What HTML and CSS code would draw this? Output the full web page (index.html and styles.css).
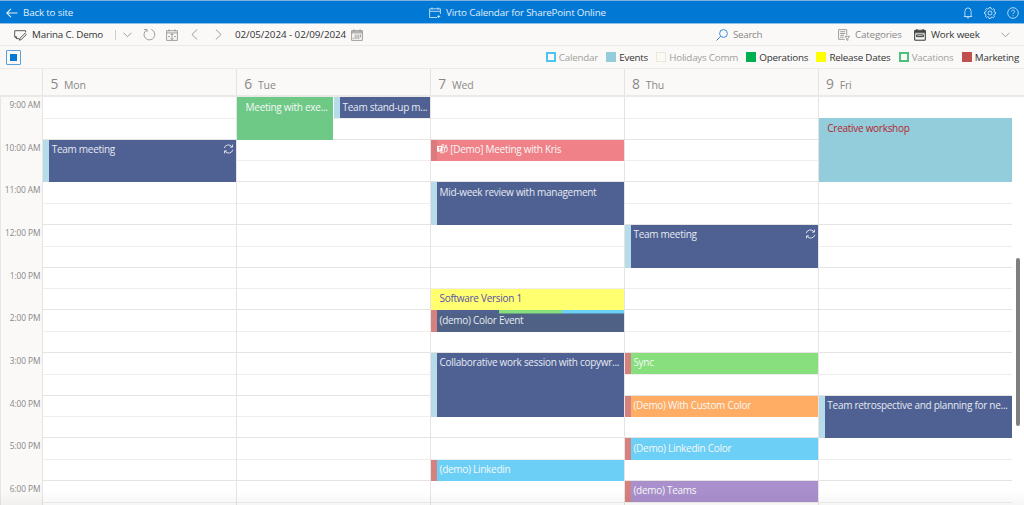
FILE: index.html
```
<!DOCTYPE html>
<html lang="en">
<head>
    <title>Virto Calendar for SharePoint Online</title>
    <meta charset="utf-8">
    <link rel="stylesheet" href="styles.css">
</head>
<body>
    <div class="app">
        <header class="topbar">
            <a class="back">
                <svg width="12" height="10" viewBox="0 0 12 10"><path d="M5 .8L.8 5L5 9.2M.8 5H11.5"/></svg>
                <span>Back to site</span>
            </a>
            <div class="title">
                <svg width="12" height="12" viewBox="0 0 12 12"><path d="M8 10.5H.6V1.8H11.4V7M.6 4.3H11.4M3 .4V2.6M9 .4V2.6"/><path d="M9.7 8V11M8.2 9.5H11.2"/></svg>
                <span>Virto Calendar for SharePoint Online</span>
            </div>
            <div class="top-actions">
                <svg width="10" height="12" viewBox="0 0 10 12"><path d="M.8 9.5H9.2M1.9 9.5V4.4a3.1 3.5 0 0 1 6.2 0V9.5M3.8 9.8a1.2 1.2 0 0 0 2.4 0"/></svg>
                <svg width="12" height="12" viewBox="0 0 12 12"><path d="M5 .6H7L7.3 2L8.5 2.5L9.7 1.7L10.8 3L10 4L10.3 5L11.5 5.3V7L10.2 7.3L9.8 8.3L10.5 9.5L9.2 10.7L8.1 10L7.1 10.3L6.8 11.5H5.1L4.8 10.2L3.7 9.8L2.6 10.5L1.3 9.2L2 8.2L1.7 7.1L.5 6.8V5L1.8 4.8L2.3 3.6L1.5 2.5L2.7 1.4L3.8 2.1L4.7 1.8Z"/><circle cx="6" cy="6" r="2"/></svg>
                <svg width="12" height="12" viewBox="0 0 12 12"><circle cx="6" cy="6" r="5.3"/><path d="M4.4 4.6a1.6 1.5 0 1 1 2.5 1.2Q6 6.4 6 7.2M6 8.3V9.2"/></svg>
            </div>
        </header>

        <div class="toolbar">
            <div class="user">
                <svg width="13" height="12" viewBox="0 0 13 12"><path d="M5 9.7H2.7L.7 7.8V1.7H11.6V3.5M2.7 9.7V7.8H.7M11 4.3L12.3 5.6L7.2 10.6L5.3 11.2L5.9 9.3Z"/></svg>
                <span>Marina C. Demo</span>
            </div>
            <div class="user-menu">
                <svg width="9" height="6" viewBox="0 0 9 6"><path d="M.5 .7L4.5 4.7L8.5 .7"/></svg>
            </div>
            <svg class="refresh" width="13" height="13" viewBox="0 0 13 13"><path d="M8.4 1.5A5.4 5.4 0 1 1 3.6 1.9M1.2 1.5H4V4.2"/></svg>
            <svg class="today" width="12" height="12" viewBox="0 0 12 12"><path d="M.6 1.7H11.4V11.4H.6ZM.6 3.9H11.4M3 .4V2.5M9 .4V2.5M6 4.8V10.6M4.6 6L6 4.6L7.4 6M4.6 9.2L6 10.6L7.4 9.2M2 7.6H4M8 7.6H10"/></svg>
            <svg class="prev" width="7" height="11" viewBox="0 0 7 11"><path d="M6.2 .5L.9 5.5L6.2 10.5"/></svg>
            <svg class="next" width="7" height="11" viewBox="0 0 7 11"><path d="M.8 .5L6.1 5.5L.8 10.5"/></svg>
            <span class="range">02/05/2024 - 02/09/2024</span>
            <svg class="picker" width="12" height="12" viewBox="0 0 12 12"><path d="M.6 1.7H11.4V11.4H.6ZM.6 2.8H11.4M.6 3.9H11.4M3 .4V2.5M9 .4V2.5M2.4 8.7V10M4.2 5.5V10M6 5.5V10M7.8 5.5V10M9.6 5.5V8.5"/></svg>
            <div class="search">
                <svg width="12" height="12" viewBox="0 0 12 12"><circle cx="7.5" cy="4.5" r="3.9"/><path d="M4.7 7.3L.5 11.5"/></svg>
                <span>Search</span>
            </div>
            <div class="categories">
                <svg width="12" height="12" viewBox="0 0 12 12"><path d="M6.8 10.3H.6V.6H8.7V6M2.2 2.7H7.2M2.2 4.5H7.2M2.2 6.3H6M2.2 8.2H5.5M7 7.3H11.6L9.9 9.4V11.4L8.6 10.8V9.4Z"/></svg>
                <span>Categories</span>
            </div>
            <div class="view">
                <svg width="12" height="12" viewBox="0 0 12 12"><path d="M.7 1.3H11.3V11.2H.7ZM.7 3.8H11.3M3 0V2.2M9 0V2.2M2.6 5.9H9.4V7.7H2.6Z"/><path d="M.7 2.6H11.3"/></svg>
                <span>Work week</span>
            </div>
            <svg class="view-menu" width="9" height="6" viewBox="0 0 9 6"><path d="M.5 .7L4.5 4.7L8.5 .7"/></svg>
        </div>

        <div class="legend">
            <div class="check-all"></div>
            <div class="sources">
                <div class="source off calendar"><i></i><span>Calendar</span></div>
                <div class="source events"><i></i><span>Events</span></div>
                <div class="source off holidays"><i></i><span>Holidays Comm</span></div>
                <div class="source operations"><i></i><span>Operations</span></div>
                <div class="source releases"><i></i><span>Release Dates</span></div>
                <div class="source off vacations"><i></i><span>Vacations</span></div>
                <div class="source marketing"><i></i><span>Marketing</span></div>
            </div>
        </div>

        <div class="week-head">
            <div></div>
            <div class="day-name"><b>5</b>Mon</div>
            <div class="day-name"><b>6</b>Tue</div>
            <div class="day-name"><b>7</b>Wed</div>
            <div class="day-name"><b>8</b>Thu</div>
            <div class="day-name"><b>9</b>Fri</div>
        </div>

        <main class="week">
            <div class="hours">
                <span>9:00 AM</span>
                <span>10:00 AM</span>
                <span>11:00 AM</span>
                <span>12:00 PM</span>
                <span>1:00 PM</span>
                <span>2:00 PM</span>
                <span>3:00 PM</span>
                <span>4:00 PM</span>
                <span>5:00 PM</span>
                <span>6:00 PM</span>
            </div>

            <div class="day">
                <div class="event navy at-1000 long-2"><span>Team meeting</span>
                    <svg width="11" height="10" viewBox="0 0 11 10"><path d="M1.2 4.2A4.3 4.2 0 0 1 9 2.8M9.5 .6V3.1H7M9.8 5.8A4.3 4.2 0 0 1 2 7.2M1.5 9.4V6.9H4"/></svg>
                </div>
            </div>

            <div class="day split">
                <div class="event green plain at-900 long-2"><span>Meeting with exe...</span></div>
                <div class="event navy second at-900"><span>Team stand-up m...</span></div>
            </div>

            <div class="day">
                <div class="event pink teams at-1000">
                    <svg width="11" height="10" viewBox="0 0 11 10"><path class="fill" d="M0 2H5.6V7.6H0Z"/><path class="mark" d="M1.3 3.5H4.3M2.8 3.5V6.5"/><path d="M6.2 3.6H10.2V6Q10.2 8 8.3 8M7.6 3.6V6.5Q7.4 9 5 9Q3.4 9 3 8"/><circle cx="5.8" cy="1.4" r="1.1"/><circle cx="9" cy="1.9" r=".8"/></svg>
                    <span>[Demo] Meeting with Kris</span>
                </div>
                <div class="event navy at-1100 long-2"><span>Mid-week review with management</span></div>
                <div class="event yellow plain at-1330"><span>Software Version 1</span></div>
                <div class="event slate marketing-bar at-1400"><span>(demo) Color Event</span></div>
                <div class="event navy at-1500 long-3"><span>Collaborative work session with copywr...</span></div>
                <div class="event sky marketing-bar at-1730"><span>(demo) Linkedin</span></div>
            </div>

            <div class="day">
                <div class="event navy at-1200 long-2"><span>Team meeting</span>
                    <svg width="11" height="10" viewBox="0 0 11 10"><path d="M1.2 4.2A4.3 4.2 0 0 1 9 2.8M9.5 .6V3.1H7M9.8 5.8A4.3 4.2 0 0 1 2 7.2M1.5 9.4V6.9H4"/></svg>
                </div>
                <div class="event lime marketing-bar at-1500"><span>Sync</span></div>
                <div class="event orange marketing-bar at-1600"><span>(Demo) With Custom Color</span></div>
                <div class="event sky marketing-bar at-1700"><span>(Demo) Linkedin Color</span></div>
                <div class="event purple marketing-bar at-1800"><span>(demo) Teams</span></div>
            </div>

            <div class="day">
                <div class="event aqua plain at-930 long-3"><span>Creative workshop</span></div>
                <div class="event navy at-1600 long-2"><span>Team retrospective and planning for ne...</span></div>
            </div>

            <div class="scroll"><div class="thumb"></div></div>
        </main>
    </div>
</body>
</html>
```
FILE: styles.css
```
* {
    box-sizing: border-box;
}
body {
    margin: 0;
    height: 505px;
    overflow: hidden;
    font-family: "Open Sans", "Noto Sans", sans-serif;
    font-size: 9.8px;
    letter-spacing: -0.18px;
    color: #333;
    background: #fff;
}
svg {
    display: block;
    flex: none;
    fill: none;
    stroke: currentColor;
    stroke-width: 0.8;
}
span {
    white-space: nowrap;
}
.app {
    display: flex;
    flex-direction: column;
    height: 505px;
}

/* blue bar */
.topbar {
    display: grid;
    grid-template-columns: 429px 1fr 62px;
    align-items: center;
    height: 24px;
    padding-top: 1px;
    background: #0078d4;
    border-top: 1px solid #7fb2e0;
    border-bottom: 1px solid #8fc0ea;
    color: #e0eefa;
}
.back, .title {
    display: flex;
    align-items: center;
}
.back {
    padding-left: 6px;
    gap: 5px;
}
.title {
    gap: 5px;
}
.back svg {
    stroke-width: 1.1;
}
.top-actions {
    display: flex;
    align-items: center;
    gap: 11px;
    padding-left: 1px;
}

/* toolbar */
.toolbar {
    display: flex;
    align-items: center;
    height: 22px;
    padding-left: 14px;
    background: #faf9f8;
    border-bottom: 1px solid #edebe9;
    color: #8a8886;
}
.user {
    display: flex;
    align-items: center;
    gap: 5px;
    width: 101px;
    color: #333;
}
.user-menu {
    display: flex;
    align-items: center;
    width: 28px;
    height: 10px;
    padding-left: 7px;
    border-left: 1px solid #d0cecc;
}
.refresh {
    margin-right: 10px;
}
.today {
    margin-right: 13px;
}
.prev {
    margin-right: 17px;
}
.next {
    margin-right: 13px;
}
.range {
    width: 116px;
    letter-spacing: -0.05px;
    color: #333;
}
.search, .categories, .view {
    display: flex;
    align-items: center;
    gap: 5px;
}
.search {
    width: 122px;
    margin-left: auto;
    letter-spacing: -0.3px;
}
.search svg {
    color: #3b8edb;
    stroke-width: 1;
}
.categories {
    width: 76px;
}
.view {
    width: 87px;
    letter-spacing: -0.2px;
    color: #333;
}
.view svg {
    stroke-width: 1;
}
.view-menu {
    margin-right: 14px;
}

/* calendar sources */
.legend {
    display: flex;
    align-items: center;
    justify-content: space-between;
    height: 23px;
    padding: 0 5px 0 6px;
    background: #faf9f8;
    border-bottom: 1px solid #edebe9;
    letter-spacing: -0.23px;
}
.check-all {
    width: 15px;
    height: 15px;
    padding: 3px;
    border: 1px solid #5a9fe0;
    border-radius: 1px;
    background: #0078d4 content-box;
}
.sources {
    display: flex;
    gap: 8.3px;
}
.source {
    display: flex;
    align-items: center;
    gap: 3px;
}
.source i {
    width: 10px;
    height: 10px;
}
.off {
    color: #a19f9d;
}
.calendar i {
    border: 2px solid #4cc5f0;
}
.events i {
    background: #93ccdb;
}
.holidays i {
    border: 1px solid #ebebd8;
}
.operations i {
    background: #00b050;
}
.releases i {
    background: #ffff00;
}
.vacations i {
    border: 2px solid #4cc07c;
}
.marketing i {
    background: #c0504d;
}

/* week grid */
.week-head, .week {
    display: grid;
    grid-template-columns: 42.4px repeat(5, 193.92px) 1fr;
}
.week-head {
    height: 28px;
    background: #faf9f8;
    border-bottom: 2px solid #ebe9e8;
}
.day-name {
    display: flex;
    align-items: baseline;
    gap: 6px;
    padding: 5px 0 0 7px;
    border-left: 1px solid #e6e4e2;
    font-size: 10.5px;
    color: #8a8886;
}
.day-name b {
    font-size: 13.8px;
    font-weight: normal;
}
.week {
    position: relative;
    height: 408px;
    overflow: hidden;
}
/* soft fade along the bottom edge */
.week::after {
    content: "";
    position: absolute;
    inset: auto 0 0 0;
    height: 14px;
    background: linear-gradient(rgba(0, 0, 0, 0), rgba(0, 0, 0, 0.04));
}
.hours {
    display: grid;
    grid-template-rows: repeat(10, 42.67px);
    padding: 2px 2px 0 0;
    background: #faf9f8;
    border-left: 1px solid #e8e6e4;
    text-align: right;
    font-size: 8.4px;
    letter-spacing: -0.1px;
    color: #8a8886;
}
.day {
    display: grid;
    grid-template-rows: repeat(20, 21.335px);
    grid-template-columns: minmax(0, 1fr);
    border-left: 1px solid #e6e4e2;
    background: repeating-linear-gradient(#fff 0 20.6px, #efeeed 20.6px 21.7px, #fff 21.7px 41.6px, #e6e4e2 41.6px 42.67px);
}
.split {
    grid-template-columns: repeat(2, minmax(0, 1fr));
    column-gap: 1px;
}
.event {
    grid-column: 1;
    display: flex;
    align-items: flex-start;
    padding: 1.5px 2px 0 2.3px;
    border-left: 6px solid #b5dce8;
    font-size: 10px;
    letter-spacing: -0.28px;
    line-height: 16px;
    color: #e6eaf3;
}
.event span {
    flex: 1;
}
.event svg {
    margin: 3px 0 0 4px;
    stroke-width: 0.9;
}
.second {
    grid-column: 2;
}
.plain {
    border-left: 0;
    padding-left: 8.3px;
}
.marketing-bar {
    border-left-color: #d4817f;
}
.navy {
    background: #4f6192;
}
.green {
    background: #6ec886;
}
.pink {
    background: #f08188;
    border-left-color: #db7b7e;
}
.yellow {
    background: #ffff70;
    color: #5b50a8;
}
.slate {
    background: linear-gradient(90deg, #4f6192 33%, #87df7d 33% 67%, #6ccff6 67%) 0 0 / 100% 3.5px no-repeat, #4f6285;
}
.lime {
    background: #87df7d;
}
.orange {
    background: #ffad64;
}
.sky {
    background: #6ccff6;
}
.purple {
    background: #a98fcc;
}
.lime, .orange, .sky, .purple, .pink, .green {
    color: #f6f8f6;
}
.aqua {
    background: #93ccdb;
    color: #b3262e;
}
.teams {
    padding-left: 0;
}
.teams svg {
    margin: 3px 2px 0 0;
}
.teams .fill {
    fill: #fff;
    stroke: none;
}
.teams .mark {
    stroke: #e57b82;
}

/* start times, one row per half hour */
.at-900 { grid-row: 1; }
.at-930 { grid-row: 2; }
.at-1000 { grid-row: 3; }
.at-1100 { grid-row: 5; }
.at-1200 { grid-row: 7; }
.at-1330 { grid-row: 10; }
.at-1400 { grid-row: 11; }
.at-1500 { grid-row: 13; }
.at-1600 { grid-row: 15; }
.at-1700 { grid-row: 17; }
.at-1730 { grid-row: 18; }
.at-1800 { grid-row: 19; }
.long-2 { grid-row-end: span 2; }
.long-3 { grid-row-end: span 3; }

.scroll {
    padding: 161px 0 0 4px;
}
.thumb {
    width: 4.5px;
    height: 168px;
    border-radius: 3px;
    background: #7f7f7f;
}
```
